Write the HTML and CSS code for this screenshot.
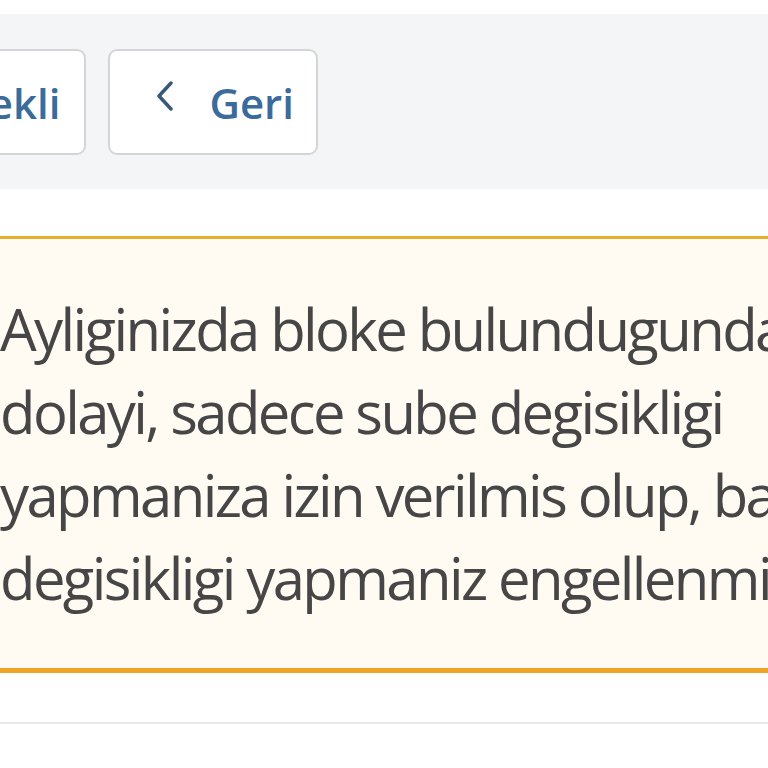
FILE: index.html
```html
<!DOCTYPE html>
<html lang="tr">
<head>
    <meta charset="UTF-8">
    <meta name="viewport" content="width=device-width, initial-scale=1.0">
    <title>Sube Degisikligi</title>
    <link rel="stylesheet" href="styles.css">
</head>
<body>
    <div class="page">
        <div class="toolbar">
            <button class="tool-btn">Tekli</button>
            <button class="tool-btn back-btn">
                <svg class="chevron" width="17" height="30" viewBox="0 0 17 30">
                    <polyline points="15,2 3,15 15,28" fill="none" stroke="#3a5878" stroke-width="3.5" stroke-linecap="round" stroke-linejoin="round"/>
                </svg>
                <span>Geri</span>
            </button>
        </div>

        <div class="notice">
            <p>Ayliginizda bloke bulundugundan dolayi, sadece sube degisikligi yapmaniza izin verilmis olup, bazi degisikligi yapmaniz engellenmistir.</p>
        </div>

        <div class="divider"></div>
    </div>
</body>
</html>
```

FILE: styles.css
```css
* {
    margin: 0;
    padding: 0;
    box-sizing: border-box;
}

body {
    font-family: 'Open Sans', 'Noto Sans', sans-serif;
    background: #fff;
    overflow: hidden;
    height: 768px;
}

.page {
    width: 1200px;
    margin-left: -120px;
    padding-top: 14px;
}

.toolbar {
    height: 175px;
    background: #f4f5f7;
    display: flex;
    align-items: flex-start;
    gap: 22px;
    padding-top: 35px;
    padding-left: 59px;
}

.tool-btn {
    height: 106px;
    background: #fff;
    border: 2px solid #d3d5d8;
    border-radius: 9px;
    font-family: 'Open Sans', sans-serif;
    font-size: 42px;
    font-weight: 600;
    color: #3b6b9b;
    padding: 0 24px 0 24px;
    display: flex;
    align-items: center;
}

.back-btn {
    padding-left: 46px;
    padding-right: 22px;
}

.chevron {
    margin-right: 36px;
    margin-top: -12px;
}

.notice {
    margin-top: 47px;
    background: #fffaf2;
    border-top: 3px solid #e6ad2f;
    border-bottom: 5px solid #f0a324;
    padding: 48px 0 49px 120px;
}

.notice p {
    width: 930px;
    font-size: 58px;
    line-height: 83px;
    letter-spacing: -2.6px;
    color: #464646;
}

.divider {
    margin-top: 49px;
    height: 2px;
    background: #e8e9eb;
}
```
